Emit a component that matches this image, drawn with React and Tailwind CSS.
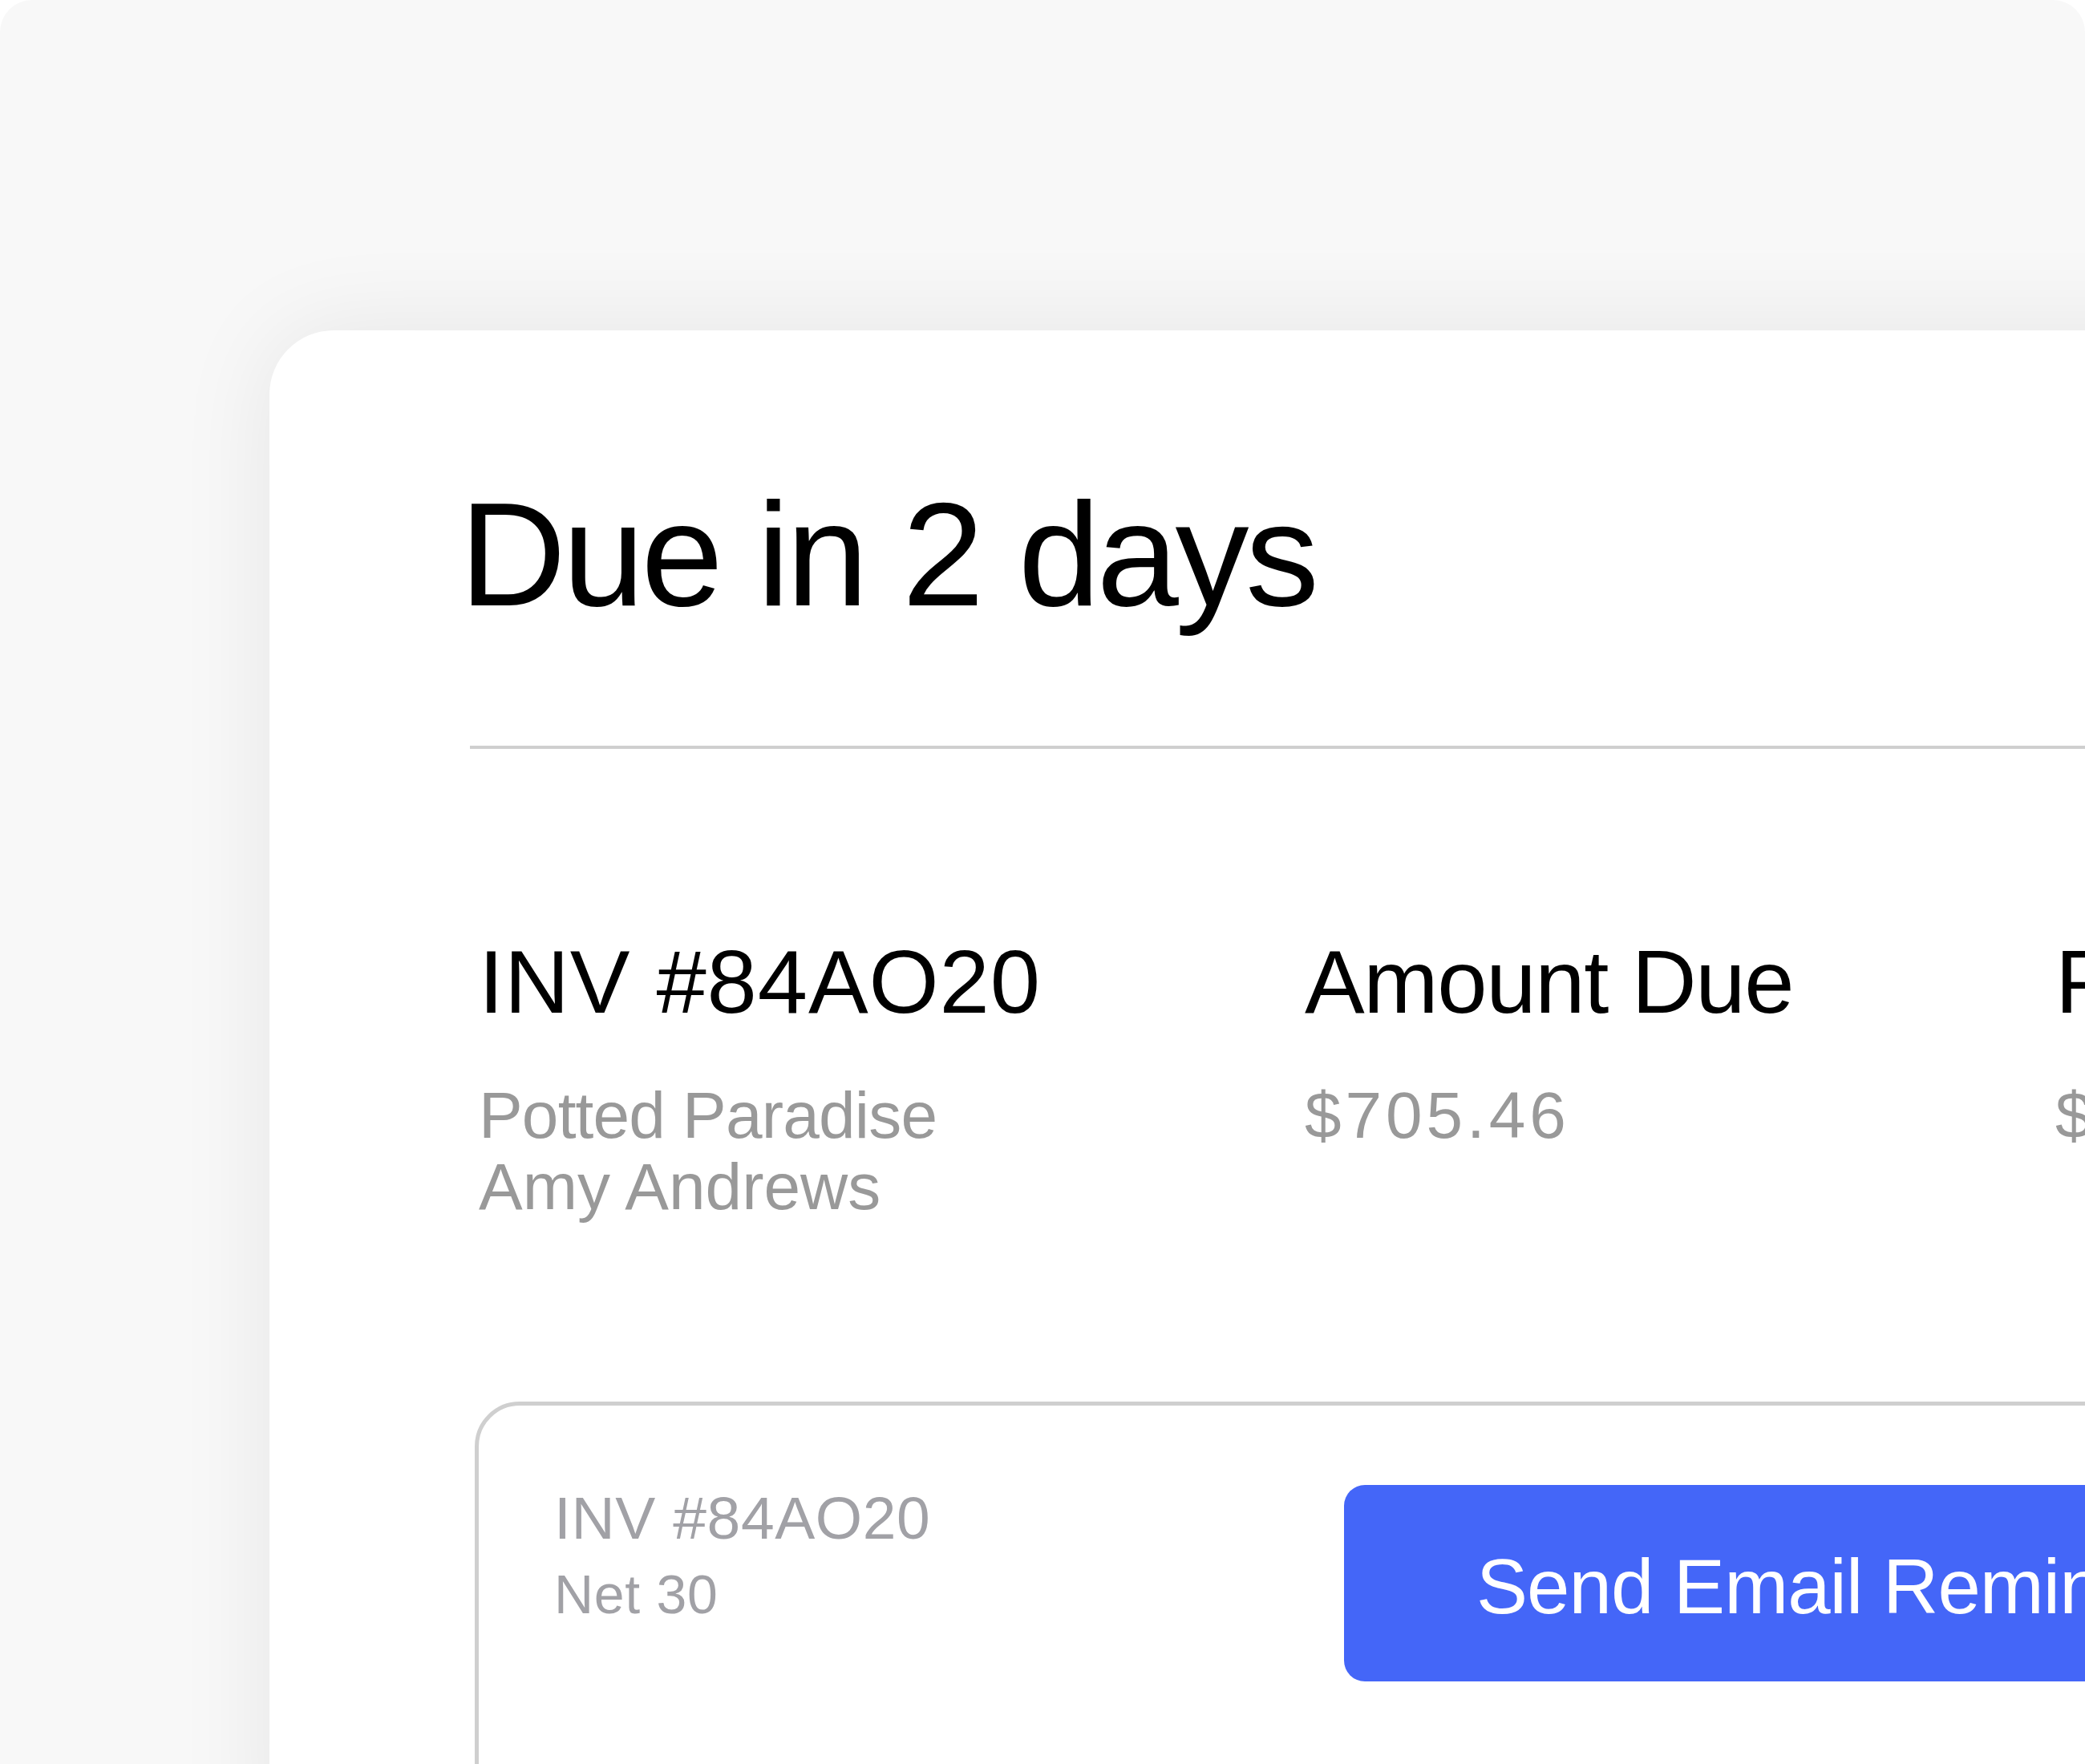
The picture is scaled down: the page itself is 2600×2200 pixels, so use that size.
import React from 'react';

const columns = [
  { title: 'INV #84AO20', titleTrack: 'tracking-[0.008em]', width: 'w-[1030px]', lines: [
    { text: 'Potted Paradise', track: 'tracking-[-0.01em]' },
    { text: 'Amy Andrews', track: 'tracking-[0em]' },
  ] },
  { title: 'Amount Due', titleTrack: 'tracking-[-0.012em]', width: 'w-[936px]', lines: [
    { text: '$705.46', track: 'tracking-[0.06em]' },
  ] },
  { title: 'Paid', titleTrack: 'tracking-[-0.012em]', width: 'w-[600px]', lines: [
    { text: '$0.00', track: 'tracking-[0.06em]' },
  ] },
];

const App = () => {
  return (
    <div
      className="w-[2600px] h-[2200px] overflow-hidden bg-white"
      style={{ fontFamily: '"Liberation Sans", Arial, sans-serif' }}
    >
      <div className="w-full h-full bg-[#f8f8f8] rounded-t-[40px] pt-[412px] pl-[336px] overflow-hidden">
        {/* Card */}
        <div className="w-[2500px] h-[1900px] bg-white rounded-tl-[80px] shadow-[0_0_120px_rgba(0,0,0,0.08)] pt-[187px] pl-[250px]">
          <h1 className="text-[184px] leading-none tracking-[-0.024em] text-black -ml-[13px] whitespace-nowrap">
            Due in 2 days
          </h1>

          <div className="mt-[147px] h-[4px] bg-[#cfcfcf]" />

          {/* Summary columns */}
          <div className="mt-[235px] flex ml-[11px]">
            {columns.map(col => (
              <div key={col.title} className={`${col.width} flex-shrink-0 whitespace-nowrap`}>
                <p className={`text-[112px] leading-none text-black ${col.titleTrack}`}>{col.title}</p>
                <div className="mt-[65px]">
                  {col.lines.map(line => (
                    <p key={line.text} className={`text-[82px] leading-[89px] text-[#999999] ${line.track}`}>
                      {line.text}
                    </p>
                  ))}
                </div>
              </div>
            ))}
          </div>

          {/* Reminder box */}
          <div className="mt-[224px] ml-[6px] h-[800px] border-[5px] border-[#cfcfcf] rounded-tl-[56px] pt-[99px] pl-[94px] flex">
            <div className="w-[985px] flex-shrink-0 pt-[4px] whitespace-nowrap">
              <p className="text-[75px] leading-none tracking-[0.008em] text-[#a1a1a6]">INV #84AO20</p>
              <p className="mt-[23px] text-[68px] leading-none tracking-[0.01em] text-[#a1a1a6]">Net 30</p>
            </div>
            <div className="h-[245px] w-[1200px] flex-shrink-0 bg-[#4466f8] rounded-[26px] pl-[165px] pt-[79px]">
              <span className="block text-[96px] leading-none tracking-[-0.01em] text-white whitespace-nowrap">
                Send Email Reminder
              </span>
            </div>
          </div>
        </div>
      </div>
    </div>
  );
};

export default App;
